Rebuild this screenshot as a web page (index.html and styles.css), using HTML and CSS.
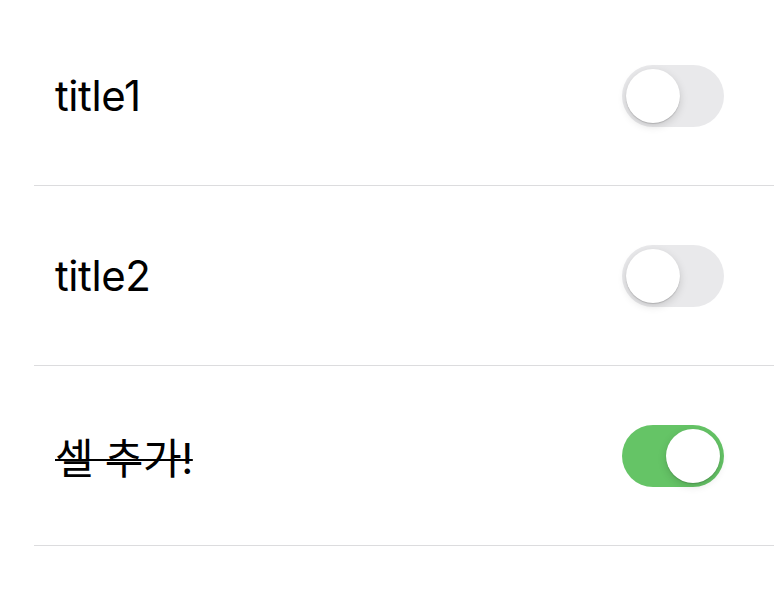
FILE: index.html
```html
<!DOCTYPE html>
<html lang="ko">
<head>
    <meta charset="UTF-8">
    <meta name="viewport" content="width=device-width, initial-scale=1.0">
    <title>Cells</title>
    <link rel="stylesheet" href="styles.css">
</head>
<body>
    <ul class="list">
        <li class="cell">
            <span class="cell-title">title1</span>
            <div class="switch"><div class="knob"></div></div>
        </li>
        <li class="cell">
            <span class="cell-title">title2</span>
            <div class="switch"><div class="knob"></div></div>
        </li>
        <li class="cell">
            <span class="cell-title done">셀 추가!</span>
            <div class="switch on"><div class="knob"></div></div>
        </li>
    </ul>
</body>
</html>
```

FILE: styles.css
```css
body {
    margin: 0;
    padding: 6px 0 0 0;
    background: #fff;
    font-family: 'Inter', 'Noto Sans CJK KR', sans-serif;
    color: #000;
}
.list {
    list-style: none;
    margin: 0;
    padding: 0 0 0 34px;
}
.cell {
    display: flex;
    align-items: center;
    justify-content: space-between;
    height: 179px;
    padding: 0 50px 0 21px;
    border-bottom: 1px solid #dcdcde;
}
.cell-title {
    font-size: 42px;
    letter-spacing: -0.4px;
}
.cell-title.done {
    text-decoration: line-through;
    text-decoration-thickness: 2px;
}
.switch {
    width: 102px;
    height: 62px;
    border-radius: 31px;
    background: #e9e9eb;
    padding: 4px;
    box-sizing: border-box;
    display: flex;
}
.switch.on {
    background: #65c466;
    justify-content: flex-end;
}
.knob {
    width: 54px;
    height: 54px;
    border-radius: 50%;
    background: #fff;
    box-shadow: 0 3px 8px rgba(0, 0, 0, 0.15), 0 1px 1px rgba(0, 0, 0, 0.16);
}
```
